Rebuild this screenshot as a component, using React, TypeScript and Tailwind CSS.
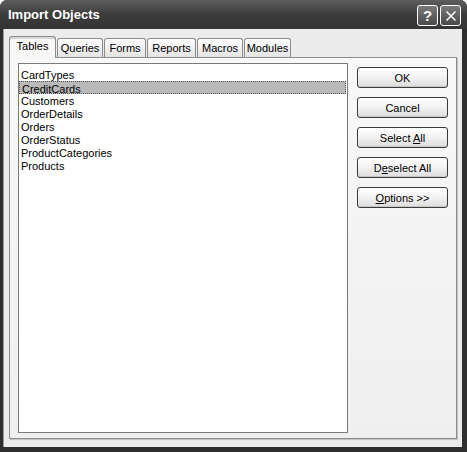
import { X } from "lucide-react";

const TABLES = [
  "CardTypes",
  "CreditCards",
  "Customers",
  "OrderDetails",
  "Orders",
  "OrderStatus",
  "ProductCategories",
  "Products",
];

const TABS = [
  { label: "Tables", w: "w-[47px]" },
  { label: "Queries", w: "w-[46px]" },
  { label: "Forms", w: "w-[42px]" },
  { label: "Reports", w: "w-[49px]" },
  { label: "Macros", w: "w-[46px]" },
  { label: "Modules", w: "w-[47px]" },
];

function XpButton({ children }: { children: React.ReactNode }) {
  return (
    <button className="h-[21px] w-[91px] rounded-[3px] border border-[#3a3a3a] bg-gradient-to-b from-[#ffffff] via-[#f2f2f2] to-[#dcdcdc] pt-px text-[11px] leading-none text-black shadow-[inset_0_-1px_0_#c8c8c8]">
      {children}
    </button>
  );
}

export default function App() {
  return (
    <div
      className="flex h-[452px] w-[467px] flex-col rounded-t-[7px] bg-[#2e2e2e]"
      style={{ fontFamily: '"Liberation Sans", Arial, sans-serif' }}
    >
      {/* Title bar */}
      <div className="flex h-[29px] items-start justify-between rounded-t-[7px] bg-gradient-to-b from-[#5e5e5e] via-[#3c3c3c] to-[#343434] pl-[8px] pr-[6px]">
        <span className="pt-[7px] text-[13px] font-bold leading-[15px] text-white">
          Import Objects
        </span>
        <div className="flex gap-[2px] pt-[5px]">
          <div className="flex h-[21px] w-[21px] items-center justify-center rounded-[3px] border border-white bg-gradient-to-b from-[#7a7a7a] to-[#4a4a4a] text-[15px] font-bold leading-none text-white">
            ?
          </div>
          <div className="flex h-[21px] w-[21px] items-center justify-center rounded-[3px] border border-white bg-gradient-to-b from-[#7a7a7a] to-[#4a4a4a] text-white">
            <X size={16} strokeWidth={2.5} />
          </div>
        </div>
      </div>

      {/* Body */}
      <div className="mb-[5px] ml-[3px] mr-[5px] flex flex-1 flex-col border-l border-[#9a9a9a] bg-[#ececec] px-[5px] pb-[8px] pt-[7px]">
        {/* Tab strip */}
        <div className="flex h-[21px] items-end">
          {TABS.map((t, i) =>
            i === 0 ? (
              <div
                key={t.label}
                className={`relative z-10 -mb-px flex h-[22px] ${t.w} items-center justify-center rounded-t-[3px] border border-b-0 border-[#8c8c8c] bg-[#f7f7f7] pb-[2px] text-[11px] text-black shadow-[inset_0_2px_0_#d6d6d6]`}
              >
                {t.label}
              </div>
            ) : (
              <div
                key={t.label}
                className={`ml-[1px] flex h-[19px] ${t.w} items-center justify-center rounded-t-[3px] border border-b-0 border-[#8c8c8c] bg-gradient-to-b from-[#ffffff] to-[#e4e4e4] text-[11px] text-black`}
              >
                {t.label}
              </div>
            )
          )}
        </div>

        {/* Tab panel */}
        <div className="flex flex-1 gap-[9px] border border-[#8c8c8c] bg-gradient-to-b from-[#f8f8f8] to-[#efefef] pb-[5px] pl-[8px] pr-[8px] pt-[5px] shadow-[1px_1px_0_#c4c4c4]">
          <div className="flex-1 border border-[#7a7a7a] bg-white pt-[4px]">
            {TABLES.map((name, i) => (
              <div
                key={name}
                className={`mr-px h-[13px] pl-[2px] pt-px text-[11px] leading-[12px] text-black ${
                  i === 1 ? "border border-dotted border-[#555] bg-[#b9b9b9] pl-[1px] pt-0 leading-[11px]" : ""
                }`}
              >
                {name}
              </div>
            ))}
          </div>

          <div className="flex flex-col gap-[9px] pt-[4px]">
            <XpButton>OK</XpButton>
            <XpButton>Cancel</XpButton>
            <XpButton>
              Select <span className="underline">A</span>ll
            </XpButton>
            <XpButton>
              D<span className="underline">e</span>select All
            </XpButton>
            <XpButton>
              <span className="underline">O</span>ptions &gt;&gt;
            </XpButton>
          </div>
        </div>
      </div>
    </div>
  );
}
